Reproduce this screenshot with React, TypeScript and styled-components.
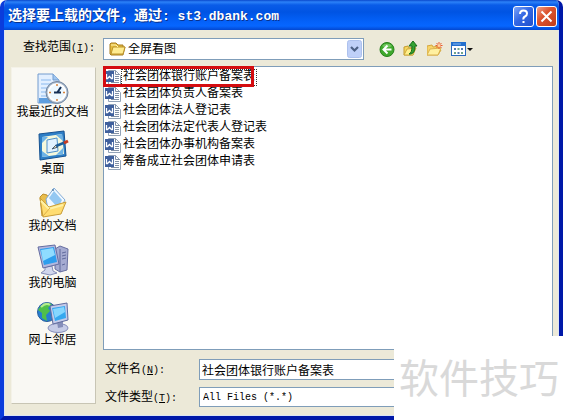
import React from 'react';
import styled, { createGlobalStyle } from 'styled-components';

const GlobalStyle = createGlobalStyle`
  * { box-sizing: border-box; }
  body { margin: 0; background: #fff; }
  body, button, input, select {
    font-family: "Liberation Mono", "Noto Sans CJK SC", monospace;
    font-size: 12px;
    color: #000;
  }
  button { padding: 0; border: 0; background: none; }
`;

const Screen = styled.div`
  position: relative;
`;

const Dialog = styled.main`
  display: flex;
  flex-direction: column;
  min-height: 100vh;
  border: solid #0a30c8;
  border-width: 0 4px 4px;
  border-color: #0a30c8 #0018a8 #0018a8 #0a3cdc;
  border-radius: 7px 7px 0 0;
  background: #ece9d8;
  overflow: hidden;
`;

const TitleBar = styled.header`
  display: flex;
  align-items: center;
  gap: 2px;
  height: 30px;
  margin: 0 -4px;
  padding: 3px 6px 0 8px;
  background: linear-gradient(#0a48cc 0, #2c82f8 2px, #0a5ce8 5px, #0054e3 12px, #0462fa 22px, #0666ff 26px, #0347d0 30px);
`;

const Title = styled.h1`
  flex: 1;
  margin: 0;
  color: #fff;
  font-size: 14px;
  line-height: 20px;
  font-weight: 700;
  white-space: pre;
  text-shadow: 1px 1px 0 #0a318c;
`;

const Latin = styled.span<{ $size?: number }>`
  font-size: ${(p) => p.$size ?? 10}px;
`;

const CaptionButton = styled.button<{ $close?: boolean }>`
  width: 21px;
  height: 21px;
  border: 1px solid #fff;
  border-radius: 3px;
  background: ${(p) =>
    p.$close
      ? 'linear-gradient(135deg, #f0a088, #dc5430 40%, #c03c18)'
      : 'linear-gradient(135deg, #7ca4f8, #3468e4 45%, #2050cc)'};
  svg { display: block; }
`;

const Body = styled.div`
  flex: 1;
  display: grid;
  grid-template-columns: 85px minmax(0, 1fr);
  grid-template-rows: 22px minmax(0, 1fr);
  gap: 6px 7px;
  padding: 8px 6px 12px 7px;
  box-shadow: inset 1px 0 #dbe4f4, inset -1px 0 #dbe4f4, inset 0 -1px #dbe4f4;
`;

const FieldLabel = styled.label<{ $end?: boolean }>`
  text-align: ${(p) => (p.$end ? 'right' : 'left')};
  line-height: ${(p) => (p.$end ? 20 : 22)}px;
  padding-right: ${(p) => (p.$end ? 1 : 0)}px;
  white-space: nowrap;
`;

const TopRow = styled.div`
  display: flex;
  align-items: center;
  gap: 15px;
`;

const FolderField = styled.div`
  position: relative;
  width: 261px;
  height: 22px;
  > svg { position: absolute; pointer-events: none; }
  > svg:first-of-type { left: 6px; top: 3px; }
  > svg:last-of-type { right: 2px; top: 2px; }
`;

const Select = styled.select<{ $indent: number }>`
  appearance: none;
  width: 100%;
  height: 100%;
  padding: 1px 0 0 ${(p) => p.$indent}px;
  border: 1px solid #7f9db9;
  border-radius: 0;
  background: #fff;
  outline: 0;
`;

const TypeSelect = styled(Select)`
  font-size: 10px;
  height: 20px;
`;

const Tools = styled.div`
  display: flex;
  gap: 7px;
`;

const ToolButton = styled.button`
  display: flex;
  height: 18px;
`;

const Places = styled.nav`
  display: flex;
  flex-direction: column;
  margin-top: 1px;
  padding-top: 5px;
  border: 1px solid;
  border-color: #f4f2e8 #c8c5b4 #c8c5b4 #f4f2e8;
  background: #f9f8f3;
`;

const Place = styled.button`
  display: flex;
  flex-direction: column;
  align-items: center;
  height: 57px;
  padding-right: 2px;
  line-height: 16px;
  white-space: nowrap;
`;

const Content = styled.section`
  display: flex;
  flex-direction: column;
  gap: 9px;
  margin-bottom: -5px;
`;

const FileList = styled.ul`
  position: relative;
  flex: 1;
  margin: 0;
  padding: 2px 1px;
  border: 1px solid #7f9db9;
  background: #fff;
  list-style: none;
`;

const FileButton = styled.button`
  display: flex;
  align-items: center;
  height: 17px;
`;

const FileName = styled.span<{ $focused?: boolean }>`
  padding: 0 1px;
  line-height: 15px;
  border: 1px dotted ${(p) => (p.$focused ? '#333' : 'transparent')};
`;

const Highlight = styled.div`
  position: absolute;
  left: -1px;
  top: -1px;
  width: 151px;
  height: 21px;
  border: 3px solid #d40c10;
  pointer-events: none;
`;

const Fields = styled.div`
  display: grid;
  grid-template-columns: 92px minmax(0, 1fr);
  grid-auto-rows: 22px;
  align-items: start;
  gap: 6px 2px;
  margin-left: 2px;
  padding-right: 90px;
`;

const NameInput = styled.input`
  height: 21px;
  min-width: 0;
  padding: 1px 2px 0;
  border: 1px solid #7f9db9;
  background: #fff;
  outline: 0;
`;

const Watermark = styled.div`
  position: absolute;
  right: 0;
  bottom: 0;
  width: 169px;
  height: 84px;
  padding-left: 5px;
  background: #fff;
  color: #d9d9d9;
  font: 400 40px/80px "Noto Sans CJK SC", sans-serif;
  white-space: nowrap;
`;

const FolderShape = () => (
  <svg width="17" height="16" viewBox="0 0 17 16">
    <path d="M1 13V3l1-1h5l2 2h5v2h2l-2 8H2z" fill="#e6bd3c" stroke="#a77d22" />
    <path d="M2 13L4 6h12l-2 7z" fill="#ffec91" stroke="#bd942c" />
    <path d="M2 4h5l2 2" fill="none" stroke="#fff4b4" />
  </svg>
);

const DropArrow = () => (
  <svg width="15" height="18" viewBox="0 0 15 18">
    <rect x=".5" y=".5" width="14" height="17" rx="2" fill="#bfd0f8" stroke="#adc1ed" />
    <path d="M4 7l3.5 3.5L11 7" fill="none" stroke="#4d6185" strokeWidth="2.2" />
  </svg>
);

const BackIcon = () => (
  <svg width="17" height="18" viewBox="0 0 17 18">
    <circle cx="8" cy="9.500" r="7" fill="#3fa82c" stroke="#26801c" />
    <path d="M3 6a6 5 0 0 1 10 0Q8 9 3 6" fill="#8bd579" opacity=".65" />
    <path d="M12.500 9.500H5M8.500 5.500l-4 4 4 4" fill="none" stroke="#fff" strokeWidth="2" />
  </svg>
);

const UpIcon = () => (
  <svg width="17" height="18" viewBox="0 0 17 18">
    <path d="M1 15V7l4-1 1 2 6-1-2 8z" fill="#f5d75d" stroke="#c49b30" />
    <path d="M1 15l3-6 9-1-3 7z" fill="#fff08c" stroke="#cfa93d" />
    <path d="M6 14q3-1 3-8H6l4-5 4 5h-2q0 7-4 8z" fill="#35a332" stroke="#176c1a" />
  </svg>
);

const NewFolderIcon = () => (
  <svg width="17" height="18" viewBox="0 0 17 18">
    <path d="M0 15V6l5-1 1 2 6-1v3l2 1-3 5z" fill="#f7d469" stroke="#d4a63e" />
    <path d="M0 15l3-6 11-1-3 7z" fill="#fff0a0" stroke="#dbb34e" />
    <path d="M12 2v7M8.500 5.500h7M9.500 3l5 5M14.500 3l-5 5" stroke="#e8572c" />
    <circle cx="12" cy="5.500" r="1.500" fill="#ffd1a0" />
  </svg>
);

const ViewIcon = () => (
  <svg width="23" height="18" viewBox="0 0 23 18">
    <rect x=".5" y="2.500" width="14" height="13" fill="#fff" stroke="#2969bd" />
    <path d="M0 2h15v4H0z" fill="#2470ce" />
    <path d="M2 4h8" stroke="#87b7ed" />
    <path d="M3 8h2v2H3zM10 8h2v2h-2zM6.500 12h2v2h-2z" fill="#527bb0" />
    <path d="M6.500 8h2v2h-2zM3 12h2v2H3zM10 12h2v2h-2z" fill="#71a58a" />
    <path d="M16 8h6l-3 3z" fill="#111" />
  </svg>
);

const WordIcon = () => (
  <svg width="16" height="17" viewBox="0 0 16 17">
    <path d="M3.500 1.500h7l5 5v9h-12z" fill="#fff" stroke="#94a4b8" />
    <path d="M10.500 1.500v4h4M10 7.500h4M10 9.500h4M10 11.500h4M6 13.500h8" stroke="#8291a6" fill="none" />
    <path d="M0 2h9v11H0z" fill="#3f609d" />
    <path d="M1.500 5v4.500h1l2-2 2 2h1V5" fill="none" stroke="#fff" strokeWidth="1.300" />
  </svg>
);

const RecentIcon = () => (
  <svg width="32" height="32" viewBox="0 0 32 32">
    <path d="M1 1h15l6 6v23H1z" fill="#e2efff" stroke="#729cce" />
    <path d="M16 1v6h6" fill="#9fc6f0" stroke="#729cce" />
    <path d="M4 7h10M4 11h13M4 15h8M4 19h6M4 23h6" stroke="#8ab9ee" />
    <path d="M2 25h14l4 5H2z" fill="#5f9edf" />
    <circle cx="20" cy="19.500" r="11" fill="#a9b9cc" stroke="#71859f" />
    <circle cx="20" cy="19.500" r="8.500" fill="#edf8ff" stroke="#fff" strokeWidth="2" />
    <path d="M20 11v2M20 26v2M12 19.500h2M26 19.500h2" stroke="#d9843b" strokeWidth="1.500" />
    <path d="M24 14l-4 6M17 19.500h7" stroke="#142f55" strokeWidth="2" />
  </svg>
);

const DesktopIcon = () => (
  <svg width="32" height="32" viewBox="0 0 32 32">
    <path d="M2 4l25-3 2 25-26 4z" fill="#2e7fc7" stroke="#175391" />
    <path d="M5 7l20-3 2 20-22 3z" fill="#f5f8dc" />
    <path d="M5 7h6l-6 6zM19 5l6-1 1 7zM5 21l7 5-7 1zM26 18v6l-7 1z" fill="#6db3e7" />
    <path d="M10 10l10-2 1 13-11 2z" fill="#e2f2ff" stroke="#4e91cb" />
    <path d="M15 19l4-4 2 2z" fill="#f2dfb3" stroke="#485e74" />
    <path d="M19 16l10-4" stroke="#1e5d98" strokeWidth="2.500" />
    <path d="M27 13l4-2" stroke="#c93c20" strokeWidth="3" />
  </svg>
);

const DocumentsIcon = () => (
  <svg width="32" height="32" viewBox="0 0 32 32">
    <path d="M3 10l3-3 4 1 4 9-9 12z" fill="#e9bd4b" stroke="#bd8f2d" />
    <path d="M9 12L17 1l11 12-7 12-10-3z" fill="#f2f9ff" stroke="#83acd7" />
    <path d="M12 11l5-7 8 9-4 8z" fill="#94c8f2" />
    <circle cx="16" cy="3" r="1" fill="#5583b0" />
    <path d="M3 11l9 9 17-5-5 12-18 3z" fill="#ffdc70" stroke="#c89d38" />
    <path d="M4 14l8 8 14-4" fill="none" stroke="#fff1a5" strokeWidth="2" />
    <path d="M6 29l7-8" stroke="#dcae45" />
  </svg>
);

const ComputerIcon = () => (
  <svg width="32" height="32" viewBox="0 0 32 32">
    <path d="M18 5l5-3 8 3-1 21-7 2-5-3z" fill="#a5abd1" stroke="#686fa0" />
    <path d="M23 5v23M25 9l4-1M25 12l4-1M25 15l4-1M25 21l3-1" stroke="#606a9c" />
    <path d="M8 23l7-1 1 5 4 2-7 2-9-2 4-3z" fill="#d1d6ed" stroke="#858eb8" />
    <path d="M1 3l17-2 4 19-16 4z" fill="#b4b8de" stroke="#646da1" />
    <path d="M3 5l14-2 3 15-13 3z" fill="#2e9eed" />
    <path d="M4 6l12-2 2 7-12 6z" fill="#8fdcff" />
  </svg>
);

const NetworkIcon = () => (
  <svg width="32" height="32" viewBox="0 0 32 32">
    <circle cx="10" cy="11" r="9.500" fill="#267fd0" stroke="#265d9e" />
    <path d="M3 6l6-4 6 1-4 4 2 3-4 4 1 6-5-3v-5L1 9z" fill="#4fbf4a" />
    <path d="M4 6q5-5 9-2" fill="none" stroke="#b4ec8b" strokeWidth="2" />
    <ellipse cx="21" cy="27" rx="10" ry="4.500" fill="#c6cce7" stroke="#858dba" />
    <path d="M20 21l6-1v6l-5 1z" fill="#858eb9" />
    <path d="M13 5l17-3 1 17-15 4z" fill="#c4cbea" stroke="#616c9e" />
    <path d="M15 7l13-2 1 12-11 3z" fill="#36a8ef" />
    <path d="M16 8l11-2 1 5-10 6z" fill="#86d7ff" />
  </svg>
);

const places = [
  { name: '我最近的文档', Icon: RecentIcon },
  { name: '桌面', Icon: DesktopIcon },
  { name: '我的文档', Icon: DocumentsIcon },
  { name: '我的电脑', Icon: ComputerIcon },
  { name: '网上邻居', Icon: NetworkIcon },
];

const files = [
  '社会团体银行账户备案表',
  '社会团体负责人备案表',
  '社会团体法人登记表',
  '社会团体法定代表人登记表',
  '社会团体办事机构备案表',
  '筹备成立社会团体申请表',
];

const tools = [
  { name: '后退', Icon: BackIcon },
  { name: '向上一级', Icon: UpIcon },
  { name: '新建文件夹', Icon: NewFolderIcon },
  { name: '查看', Icon: ViewIcon },
];

const AccessKey = ({ letter }: { letter: string }) => (
  <Latin>(<u>{letter}</u>):</Latin>
);

export default function App() {
  return (
    <Screen>
      <GlobalStyle />
      <Dialog>
        <TitleBar>
          <Title>选择要上载的文件，通过<Latin $size={13}>: st3.dbank.com</Latin></Title>
          <CaptionButton aria-label="帮助">
            <svg width="19" height="19" viewBox="0 0 19 19">
              <path d="M6 7q0-3.500 3.500-3.500T13 6.500q0 2-2 3t-1.500 3" fill="none" stroke="#fff" strokeWidth="2" />
              <path d="M8.500 14h2v2h-2z" fill="#fff" />
            </svg>
          </CaptionButton>
          <CaptionButton $close aria-label="关闭">
            <svg width="19" height="19" viewBox="0 0 19 19">
              <path d="M4.500 4.500l10 10M14.500 4.500l-10 10" stroke="#fff" strokeWidth="2" />
            </svg>
          </CaptionButton>
        </TitleBar>
        <Body>
          <FieldLabel $end htmlFor="folder">查找范围<AccessKey letter="I" /></FieldLabel>
          <TopRow>
            <FolderField>
              <Select id="folder" $indent={24}><option>全屏看图</option></Select>
              <FolderShape />
              <DropArrow />
            </FolderField>
            <Tools>
              {tools.map(({ name, Icon }) => (
                <ToolButton key={name} aria-label={name}><Icon /></ToolButton>
              ))}
            </Tools>
          </TopRow>
          <Places>
            {places.map(({ name, Icon }) => (
              <Place key={name}><Icon />{name}</Place>
            ))}
          </Places>
          <Content>
            <FileList>
              {files.map((name, i) => (
                <li key={name}>
                  <FileButton><WordIcon /><FileName $focused={i === 0}>{name}</FileName></FileButton>
                </li>
              ))}
              <Highlight />
            </FileList>
            <Fields>
              <FieldLabel htmlFor="name">文件名<AccessKey letter="N" /></FieldLabel>
              <NameInput id="name" defaultValue="社会团体银行账户备案表" />
              <FieldLabel htmlFor="type">文件类型<AccessKey letter="T" /></FieldLabel>
              <TypeSelect id="type" $indent={3}><option>All Files (*.*)</option></TypeSelect>
            </Fields>
          </Content>
        </Body>
      </Dialog>
      <Watermark>软件技巧</Watermark>
    </Screen>
  );
}
